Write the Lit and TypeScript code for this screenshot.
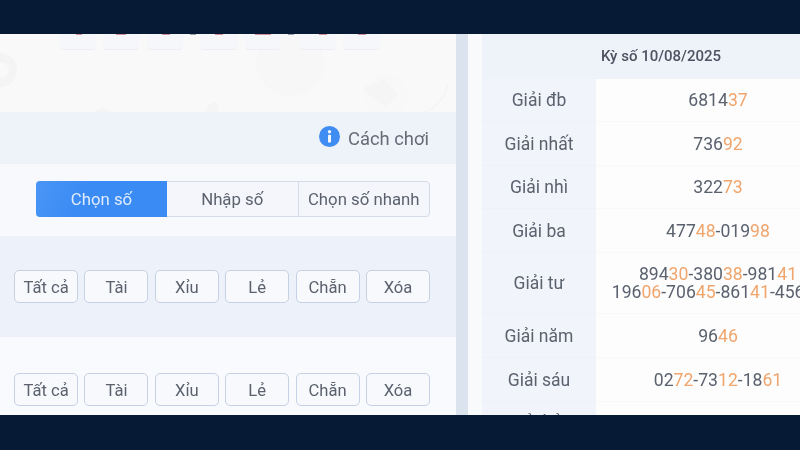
import { LitElement, html, css } from "lit";
import { customElement } from "lit/decorators.js";

const split = (groups: string[]) =>
  groups.map((g, i) => html`${i > 0 ? "-" : ""}${g.slice(0, -2)}<span class="hl">${g.slice(-2)}</span>`);

const CHIPS = [
  { w: 36, gap: 7, mark: 6, ml: 16 },
  { w: 36, gap: 8, mark: 10, ml: 13 },
  { w: 36, gap: 17, mark: 8, ml: 15 },
  { w: 38, gap: 7, mark: 8, ml: 15 },
  { w: 36, gap: 19, mark: 16, ml: 10 },
  { w: 36, gap: 7, mark: 8, ml: 19 },
  { w: 37, gap: 0, mark: 8, ml: 15 },
];
const QUICK = ["Tất cả", "Tài", "Xỉu", "Lẻ", "Chẵn", "Xóa"];
const RESULTS: { label: string; lines: string[][]; cls?: string }[] = [
  { label: "Giải đb", lines: [["681437"]] },
  { label: "Giải nhất", lines: [["73692"]], cls: "tall" },
  { label: "Giải nhì", lines: [["32273"]] },
  { label: "Giải ba", lines: [["47748", "01998"]], cls: "tall" },
  { label: "Giải tư", lines: [["89430", "38038", "98141"], ["19606", "70645", "86141", "45626"]], cls: "multi" },
  { label: "Giải năm", lines: [["9646"]], cls: "tall" },
  { label: "Giải sáu", lines: [["0272", "7312", "1861"]], cls: "tall" },
  { label: "Giải bảy", lines: [["123", "456", "789", "012"]], cls: "last" },
];

@customElement("app-root")
export class AppRoot extends LitElement {
  static styles = css`
    :host {
      display: flex;
      flex-direction: column;
      width: 800px;
      height: 450px;
      background: #061a36;
      font-family: Roboto, "Liberation Sans", sans-serif;
      color: #5b626e;
      overflow: hidden;
    }
    .frame {
      margin-top: 34px;
      height: 381px;
      display: flex;
      overflow: hidden;
      background: #dbe3ee;
      filter: blur(0.35px);
    }
    .left {
      width: 456px;
      flex: none;
      display: flex;
      flex-direction: column;
    }
    .hero {
      position: relative;
      height: 78px;
      flex: none;
      background: #f9f9fa;
      overflow: hidden;
    }
    .art {
      position: absolute;
      inset: 0;
    }
    .chips {
      position: relative;
      display: flex;
      padding-left: 60px;
    }
    .chip {
      height: 16px;
      background: #f6f7fb;
      border-bottom: 1px solid #eceef3;
      border-radius: 0 0 4px 4px;
      box-sizing: border-box;
    }
    .mark {
      height: 1px;
      background: #b8404c;
      opacity: 0.55;
    }
    .how {
      height: 52px;
      flex: none;
      background: #eef2f9;
      display: flex;
      align-items: center;
      justify-content: flex-end;
      gap: 8px;
      padding-right: 27px;
      font-size: 18.4px;
      color: #666c78;
    }
    .how svg {
      display: block;
      margin-top: -4px;
    }
    .tabs-row {
      height: 72px;
      flex: none;
      background: #f8f9fc;
      display: flex;
      align-items: center;
      justify-content: flex-end;
      padding-right: 26px;
      box-sizing: border-box;
      padding-bottom: 2px;
    }
    .tabs {
      display: flex;
      width: 394px;
      height: 36px;
      border-radius: 4px;
      border: 1px solid #d5dbe8;
      box-sizing: border-box;
      background: #f4f6fc;
      font-size: 16.8px;
      color: #5b626e;
    }
    .tab {
      display: flex;
      align-items: center;
      justify-content: center;
      flex: 1 1 0;
      white-space: nowrap;
    }
    .tab + .tab {
      border-left: 1px solid #d5dbe8;
    }
    .tab.active {
      margin: -1px 0 -1px -1px;
      flex: none;
      width: 131px;
      background: linear-gradient(115deg, #4a96f6 0%, #3b8bf4 35%, #3b8bf4 100%);
      color: #e0ecfd;
      border-radius: 4px 0 0 4px;
    }
    .tab.active + .tab {
      border-left: none;
    }
    .quick {
      flex: none;
      display: flex;
      justify-content: flex-end;
      padding-right: 26px;
      box-sizing: border-box;
      gap: 6.4px;
    }
    .q1 {
      height: 101px;
      background: #edf1f9;
      align-items: center;
    }
    .q2 {
      flex: 1 1 auto;
      background: #f9fafd;
      align-items: flex-start;
      padding-top: 36px;
    }
    .btn {
      width: 64px;
      height: 33px;
      box-sizing: border-box;
      border: 1px solid #c6d1e3;
      border-radius: 5px;
      background: #f8f9fd;
      display: flex;
      align-items: center;
      justify-content: center;
      font-size: 16.6px;
      color: #5b626e;
      white-space: nowrap;
      padding-top: 1px;
    }
    .right {
      margin-left: 12px;
      flex: 1 1 auto;
      min-width: 0;
      display: flex;
      flex-direction: column;
      background: #f9fafc;
      padding-left: 14px;
      overflow: hidden;
    }
    .head {
      height: 45px;
      flex: none;
      width: 358px;
      background: #eef2f9;
      display: flex;
      align-items: center;
      justify-content: center;
      font-size: 15px;
      font-weight: 500;
      color: #4c5361;
      box-sizing: border-box;
      padding-bottom: 2px;
    }
    .row {
      display: flex;
      flex: none;
      height: 43px;
      width: 358px;
    }
    .row.tall {
      height: 44px;
    }
    .row.multi {
      height: 61px;
    }
    .row.last {
      height: 40px;
    }
    .label {
      width: 114px;
      flex: none;
      background: #f1f4fb;
      border-bottom: 1px solid #eef1f8;
      display: flex;
      align-items: center;
      justify-content: center;
      font-size: 17.5px;
      color: #5b626e;
      box-sizing: border-box;
    }
    .value {
      flex: 1 1 auto;
      background: #fdfdfe;
      border-bottom: 1px solid #f9f9fc;
      display: flex;
      flex-direction: column;
      align-items: center;
      justify-content: center;
      font-size: 17.6px;
      line-height: 18px;
      color: #5b626e;
      white-space: nowrap;
      box-sizing: border-box;
    }
    .hl {
      color: #f0a56c;
    }
  `;

  render() {
    return html`
      <div class="frame">
        <div class="left">
          <div class="hero">
            <svg class="art" width="456" height="78" viewBox="0 0 456 78" fill="none">
              <circle cx="0" cy="36" r="17" fill="#f4f4f5" />
              <circle cx="2" cy="36" r="7" fill="#f9f9fa" />
              <circle cx="290" cy="28" r="34" fill="#f7f7f8" />
              <circle cx="385" cy="62" r="22" fill="#f8f8f9" />
              <path d="M362 55 l22 -10 l14 16 l-12 12z" fill="#f5f5f6" />
              <path d="M448 50 q-6 22 -24 28" stroke="#f5f5f6" stroke-width="2" />
              <path d="M94 78 q10 -8 18 0z" fill="#f5f5f6" />
              <path d="M205 78 q5 -12 12 -10 l2 10z" fill="#f5f5f6" />
              <rect x="190" y="0" width="6" height="1" fill="#3a4a60" opacity="0.5" />
              <rect x="288" y="0" width="6" height="1" fill="#3a4a60" opacity="0.5" />
            </svg>
            <div class="chips">
              ${CHIPS.map(
                (c) => html`<div class="chip" style="width:${c.w}px;margin-right:${c.gap}px">
                  <div class="mark" style="width:${c.mark}px;margin-left:${c.ml}px"></div>
                </div>`
              )}
            </div>
          </div>
          <div class="how">
            <svg width="21" height="21" viewBox="0 0 21 21">
              <circle cx="10.5" cy="10.5" r="10.5" fill="#3f8cf3" />
              <circle cx="10.5" cy="5.8" r="1.7" fill="#f2f6fd" />
              <rect x="9" y="8.8" width="3" height="7.8" rx="0.6" fill="#f2f6fd" />
            </svg>
            <span>Cách chơi</span>
          </div>
          <div class="tabs-row">
            <div class="tabs">
              <div class="tab active">Chọn số</div>
              <div class="tab">Nhập số</div>
              <div class="tab">Chọn số nhanh</div>
            </div>
          </div>
          <div class="quick q1">${QUICK.map((q) => html`<div class="btn">${q}</div>`)}</div>
          <div class="quick q2">${QUICK.map((q) => html`<div class="btn">${q}</div>`)}</div>
        </div>
        <div class="right">
          <div class="head">Kỳ số 10/08/2025</div>
          ${RESULTS.map(
            (r) => html`<div class="row ${r.cls ?? ""}">
              <div class="label">${r.label}</div>
              <div class="value">${r.lines.map((l) => html`<div>${split(l)}</div>`)}</div>
            </div>`
          )}
        </div>
      </div>
    `;
  }
}
